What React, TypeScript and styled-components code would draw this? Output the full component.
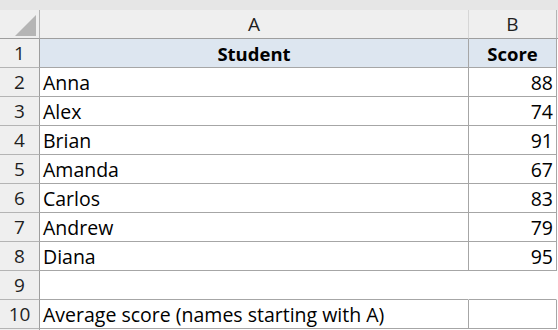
import React from "react";
import styled, { createGlobalStyle } from "styled-components";

const Global = createGlobalStyle`
  html, body { margin: 0; padding: 0; background: #ffffff; }
  body { font-family: "Open Sans", "Noto Sans", sans-serif; }
`;

const Sheet = styled.div`
  width: 558px;
  height: 330px;
  overflow: hidden;
  background: #ffffff;
`;

const TopBand = styled.div`
  height: 10px;
  background: #e6e6e6;
`;

const Grid = styled.div`
  display: grid;
  grid-template-columns: 40px 429px 88px 1px;
  grid-auto-rows: 29px;
`;

const Corner = styled.div`
  position: relative;
  background: #efefef;
  border-right: 1px solid #b4b4b4;
  border-bottom: 1px solid #9e9e9e;
`;

const Triangle = styled.svg`
  position: absolute;
  left: 15px;
  top: 5px;
`;

const ColHead = styled.div<{ $last?: boolean }>`
  background: #efefef;
  border-right: 1px solid ${(p) => (p.$last ? "#b4b4b4" : "#d6d6d6")};
  border-bottom: 1px solid #9e9e9e;
  display: flex;
  align-items: flex-end;
  justify-content: center;
  padding-bottom: 4px;
  font-size: 19px;
  color: #1f1f1f;
  line-height: 1;
`;

const Filler = styled.div<{ $head?: boolean }>`
  background: ${(p) => (p.$head ? "#efefef" : "#ffffff")};
  border-bottom: ${(p) => (p.$head ? "1px solid #9e9e9e" : "none")};
`;

const RowHead = styled.div`
  background: #efefef;
  border-right: 1px solid #9e9e9e;
  border-bottom: 1px solid #b4b4b4;
  display: flex;
  align-items: flex-end;
  justify-content: center;
  padding-bottom: 4px;
  font-size: 19px;
  color: #1f1f1f;
  line-height: 1;
`;

const Cell = styled.div<{
  $align?: "left" | "right" | "center";
  $bold?: boolean;
  $fill?: boolean;
  $plain?: boolean;
}>`
  background: ${(p) => (p.$fill ? "#dde6f0" : "#ffffff")};
  border-right: ${(p) => (p.$plain ? "1px solid transparent" : "1px solid #a6a6a6")};
  border-bottom: 1px solid #a6a6a6;
  display: flex;
  align-items: flex-end;
  justify-content: ${(p) =>
    p.$align === "right" ? "flex-end" : p.$align === "center" ? "center" : "flex-start"};
  padding: 0 3px 4px 3px;
  font-size: ${(p) => (p.$bold ? "18.5px" : "19.5px")};
  font-weight: ${(p) => (p.$bold ? 700 : 400)};
  color: #000000;
  line-height: 1;
  white-space: nowrap;
  overflow: visible;
`;

const data: [string, number][] = [
  ["Anna", 88],
  ["Alex", 74],
  ["Brian", 91],
  ["Amanda", 67],
  ["Carlos", 83],
  ["Andrew", 79],
  ["Diana", 95],
];

export default function App() {
  return (
    <Sheet>
      <Global />
      <TopBand />
      <Grid>
        <Corner>
          <Triangle width="22" height="21" viewBox="0 0 22 21">
            <polygon points="21,0 21,21 0,21" fill="#b5b5b5" />
          </Triangle>
        </Corner>
        <ColHead>A</ColHead>
        <ColHead $last>B</ColHead>
        <Filler $head />

        <RowHead>1</RowHead>
        <Cell $align="center" $bold $fill>Student</Cell>
        <Cell $align="center" $bold $fill>Score</Cell>
        <Filler />

        {data.map(([name, score], i) => (
          <React.Fragment key={name}>
            <RowHead>{i + 2}</RowHead>
            <Cell>{name}</Cell>
            <Cell $align="right">{score}</Cell>
            <Filler />
          </React.Fragment>
        ))}

        <RowHead>9</RowHead>
        <Cell $plain />
        <Cell $plain />
        <Filler />

        <RowHead>10</RowHead>
        <Cell>Average score (names starting with A)</Cell>
        <Cell />
        <Filler />

        <RowHead />
        <Cell $plain />
        <Cell $plain />
        <Filler />
      </Grid>
    </Sheet>
  );
}
